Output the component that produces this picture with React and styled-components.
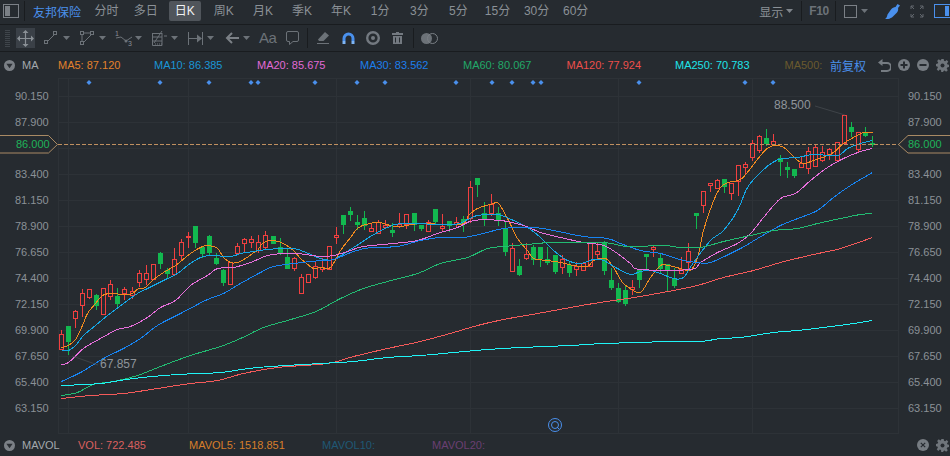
import React from "react";
import styled, { createGlobalStyle } from "styled-components";

const Global = createGlobalStyle`
  html, body { margin: 0; padding: 0; background: #262b30; }
  * { box-sizing: border-box; }
`;

const BG = "#262b30";
const GREY = "#8b9197";
const ICON = "#6c7278";
const BLUE = "#4a90ec";
const FONT = `"Liberation Sans", "Noto Sans CJK SC", sans-serif`;

const Page = styled.div`
  width: 950px; height: 456px; overflow: hidden; background: ${BG};
  font-family: ${FONT}; font-size: 11px; color: ${GREY};
  display: flex; flex-direction: column;
`;
const TopBar = styled.header`
  height: 25px; flex: none; display: flex; align-items: center;
  border-bottom: 1px solid #191c1f; padding-bottom: 2px;
`;
const Ico = styled.svg`
  flex: none; display: block; margin-left: ${(p) => p.$ml || 0}px;
`;
const Sep = styled.span`
  flex: none; width: 1px; height: ${(p) => p.$h || 20}px; background: #191c1f;
  margin-left: ${(p) => p.$ml || 0}px;
`;
const Title = styled.span`
  font-size: 12px; color: ${BLUE}; margin-left: 8px; width: 54px; white-space: nowrap;
`;
const NavItem = styled.span`
  flex: none; width: 39.1px; display: flex; justify-content: center; white-space: nowrap;
  font-size: 12px; color: ${GREY};
`;
const NavLabel = styled.span`
  height: 20px; line-height: 20px; padding: 0 6px; border-radius: 2px;
  background: ${(p) => (p.$active ? "#50555b" : "transparent")};
  color: ${(p) => (p.$active ? "#f2f3f4" : GREY)};
`;
const RightTools = styled.div`
  margin-left: auto; margin-right: -3px; display: flex; align-items: center;
`;
const Show = styled.span`
  font-size: 12px; color: ${GREY};
`;
const F10 = styled.span`
  font-size: 12px; font-weight: 700; color: #6c7278; margin-left: 7px; letter-spacing: -0.3px;
`;
const ToolBar = styled.div`
  height: 27px; flex: none; display: flex; align-items: center;
  border-bottom: 1px solid #191c1f;
`;
const MoveBox = styled.span`
  flex: none; width: 19px; height: 20px; margin-left: 6px; background: #3a4047;
  display: flex; align-items: center; justify-content: center;
`;
const AaText = styled.span`
  flex: none; width: 16px; margin-left: 9px; font-size: 15px; line-height: 20px;
  color: ${ICON}; white-space: nowrap; letter-spacing: -0.5px;
`;
const LegendRow = styled.div`
  height: ${(p) => p.$h}px; flex: none; display: flex; align-items: center; white-space: nowrap;
`;
const DropName = styled.span`
  color: #a3a8ad; margin-left: 7px; width: ${(p) => p.$w}px; flex: none;
`;
const Legend = styled.span`
  flex: none; width: ${(p) => p.$w}px; color: ${(p) => p.$c};
`;
const Adjust = styled.span`
  font-size: 12px; color: ${BLUE}; width: 48px; flex: none;
`;
const Chart = styled.main`
  position: relative; height: 356px; flex: none; display: flex;
`;
const Axis = styled.div`
  flex: none; width: ${(p) => p.$w}px; padding: 5px 0 0 ${(p) => p.$pl}px;
  display: flex; flex-direction: column;
`;
const Tick = styled.span`
  height: 26px; line-height: 26px; color: ${GREY}; white-space: nowrap;
`;
const Plot = styled.svg`
  flex: none; display: block;
`;
const PriceTag = styled.div`
  position: absolute; top: 57px; left: ${(p) => p.$x}px; width: ${(p) => p.$w}px; height: 19px;
  padding-left: ${(p) => p.$pl}px; line-height: 19px; color: #1fb35a;
  & > svg { position: absolute; left: 0; top: 0; }
  & > span { position: relative; }
`;
const Note = styled.span`
  position: absolute; left: ${(p) => p.$x}px; top: ${(p) => p.$y}px;
  font-size: 12px; line-height: 14px; color: #8f959b;
`;

const Caret = ({ ml, c = ICON }) => (
  <Ico $ml={ml} width="7" height="4" viewBox="0 0 7 4"><path d="M0 0h7L3.5 4z" fill={c} /></Ico>
);
const Drop = ({ ml }) => (
  <Ico $ml={ml} width="11" height="11" viewBox="0 0 11 11">
    <circle cx="5.5" cy="5.5" r="5.5" fill="#7c8187" />
    <path d="M2.4 3.8h6.2L5.5 8.2z" fill="#2b3035" />
  </Ico>
);
const Gear = ({ ml }) => (
  <Ico $ml={ml} width="13" height="13" viewBox="0 0 13 13">
    <path d="M5.3 0h2.4l.3 1.8 1.2.5L10.7 1l1.6 1.7-1.3 1.5.5 1.2 1.5.3v2.4l-1.8.3-.5 1.2 1.1 1.6-1.7 1.6-1.5-1.2-1.2.5-.2 1.6H5.3L5 11.1l-1.2-.5L2.3 11.9.7 10.3 1.9 8.8 1.4 7.6 0 7.3V4.900l1.700-.3.500-1.200L1.100 1.900 2.800.3 4.300 1.500 5.100 1.100z" fill="#6f757b" />
    <circle cx="6.5" cy="6.5" r="2" fill={BG} />
  </Ico>
);
const RoundBtn = ({ ml, kind }) => (
  <Ico $ml={ml} width="12" height="12" viewBox="0 0 12 12">
    <circle cx="6" cy="6" r="6" fill="#767c82" />
    {kind === "x" ? (
      <path d="M3.8 3.8l4.4 4.4M8.2 3.8L3.8 8.2" stroke={BG} strokeWidth="1.2" />
    ) : (
      <path d={kind === "plus" ? "M2.5 6h7M6 2.5v7" : "M2.5 6h7"} stroke={BG} strokeWidth="2" />
    )}
  </Ico>
);

const navItems = ["分时", "多日", "日K", "周K", "月K", "季K", "年K", "1分", "3分", "5分", "15分", "30分", "60分"];

const leftTicks = ["90.150", "87.900", "", "83.400", "81.150", "78.900", "76.650", "74.400", "72.150", "69.900", "67.650", "65.400", "63.150"];

const dots = [89, 160, 209, 251, 258, 315, 357, 385, 456, 492, 512, 533, 541, 639, 745, 773];

const hGrid = [96, 122, 148, 174, 200, 226, 252, 278, 304, 330, 356, 382, 408];
const vGrid = [68, 188, 336, 470, 618, 752];

// kind, body top, body bottom, wick top, wick bottom (page pixels)
const candles = [
  ["r",334,349,330,349],["g",326,342,326,355],["r",311,318,310,328],["r",293,305,289,317],["r",289,297,289,299],
  ["g",295,306,294,310],["r",288,314,288,314],["r",284,296,280,300],["g",296,304,288,307],["r",289,293,287,300],
  ["r",291,295,287,299],["r",273,282,270,287],["r",273,279,265,285],["r",264,279,264,279],["g",253,264,252,269],
  ["g",270,274,268,279],["r",259,274,248,274],["r",242,255,239,260],["r",236,236,232,248],["g",226,243,226,248],
  ["g",247,254,247,258],["g",236,253,235,256],["g",258,264,253,265],["g",270,283,269,286],["r",262,284,262,284],
  ["r",246,253,243,255],["r",239,243,238,252],["r",239,242,236,248],["r",242,250,235,253],["r",235,247,231,250],
  ["g",236,244,236,244],["g",247,253,238,255],["g",257,269,248,269],["r",258,268,257,271],["r",277,293,274,293],
  ["r",274,282,274,282],["r",266,277,262,279],["r",267,269,258,272],["r",246,269,246,269],["r",235,237,227,244],
  ["g",215,225,215,234],["g",211,215,207,221],["g",222,225,215,230],["g",218,226,211,230],["r",228,231,223,232],
  ["r",222,233,220,233],["r",225,227,220,229],["g",230,233,223,237],["r",224,226,213,228],["r",214,224,214,229],
  ["g",213,225,213,231],["g",225,229,225,231],["r",222,231,220,231],["g",209,222,209,225],["r",226,228,214,231],
  ["g",221,226,221,232],["r",222,224,217,227],["g",219,224,216,232],["r",187,218,181,223],["g",178,185,178,197],
  ["g",213,219,202,226],["r",204,213,194,216],["g",213,220,207,226],["g",229,252,221,256],["r",248,271,243,272],
  ["g",266,275,259,276],["r",254,258,243,260],["g",247,260,245,265],["g",247,259,247,267],["g",259,263,247,265],
  ["g",255,272,255,274],["r",259,267,255,274],["g",265,273,262,277],["r",266,269,262,276],["r",263,270,262,270],
  ["r",242,266,242,266],["r",251,254,242,260],["g",242,271,241,275],["g",280,288,268,290],["g",288,302,283,303],
  ["g",290,304,285,306],["r",287,289,280,295],["g",269,280,269,288],["g",254,257,254,270],["r",247,249,246,257],
  ["g",258,269,253,273],["g",264,270,264,292],["g",279,286,268,288],["r",269,273,257,274],["r",251,262,243,270],
  ["g",213,216,213,229],["r",191,205,191,213],["r",183,185,183,192],["r",180,188,179,188],["g",179,187,179,193],
  ["r",183,193,183,200],["r",165,181,165,196],["r",164,167,162,175],["r",143,157,140,161],["r",136,150,135,153],
  ["g",138,144,129,146],["r",141,144,134,145],["g",158,162,155,176],["g",167,170,162,178],["g",169,176,169,178],
  ["r",163,167,157,167],["r",151,168,147,174],["r",147,166,145,167],["r",152,160,146,162],["r",149,154,148,160],
  ["r",142,160,142,160],["r",115,143,115,143],["g",127,132,122,137],["r",132,149,132,152],["g",132,136,127,137],
  ["g",143,145,136,147],
];

const lines = [
  { c: "#f28a1e", p: "61,347 68,345 75,339 82,325 87,313 95,303 102,295 110,293 123,294 132,293 138,288 145,287 153,279 163,272 175,265 185,257 190,253 200,247 207,245 217,248 223,257 230,262 237,262 245,258 252,253 257,250 263,242 273,240 283,243 293,250 300,258 305,262 313,268 320,267 330,267 340,250 350,237 357,228 365,224 378,222 390,225 400,226 420,223 460,224 468,215 477,208 490,204 498,203 507,218 517,238 527,250 533,258 547,260 560,262 573,265 587,266 593,260 605,258 613,267 622,282 630,288 640,292 650,277 660,265 668,265 680,268 690,270 697,257 703,230 712,203 720,187 728,182 740,179 750,168 760,155 768,147 777,145 785,148 795,158 803,163 813,160 822,157 833,152 843,143 853,137 863,132 872,132" },
  { c: "#14a6e6", p: "61,350 68,350 75,345 83,335 95,325 107,315 123,303 137,293 147,288 163,280 177,273 187,265 200,257 210,255 230,256 240,253 247,252 267,249 293,248 308,253 320,258 333,259 353,247 370,236 387,227 403,223 453,224 467,219 477,215 497,214 513,220 527,227 540,237 553,250 567,260 580,263 593,259 603,260 617,268 630,274 640,271 650,270 660,273 673,278 683,277 693,262 710,240 723,230 737,210 747,187 760,172 772,162 782,158 797,157 813,154 837,155 847,148 860,143 872,140" },
  { c: "#e86fdc", p: "61,364 68,362 83,348 100,338 117,329 130,326 147,317 160,307 175,300 190,285 207,275 217,268 233,267 250,262 267,255 283,253 297,253 320,256 333,255 347,251 363,246 393,243 417,240 437,233 457,227 473,220 500,220 523,225 540,232 560,237 583,242 603,245 617,253 630,263 640,269 690,269 700,262 717,252 737,243 750,233 763,217 780,198 795,193 810,180 827,167 843,158 860,151 872,148" },
  { c: "#1784f2", p: "61,381 80,372 103,358 123,348 140,338 157,325 180,313 207,299 223,293 240,283 260,272 273,266 293,263 320,260 333,259 353,251 370,247 397,246 420,240 440,237 463,237 483,233 503,228 533,227 553,230 583,236 607,238 620,243 640,250 660,253 683,260 697,262 710,262 740,248 757,238 780,225 800,217 817,210 833,197 850,185 872,172" },
  { c: "#22bb72", p: "61,395 77,392 93,384 113,381 137,375 160,366 190,355 220,346 240,338 263,327 287,320 307,314 320,309 340,298 363,288 387,281 417,273 440,263 467,257 487,248 503,246 537,243 553,242 603,242 627,246 663,245 680,247 700,247 723,241 750,235 773,230 797,228 817,223 840,218 860,214 872,213" },
  { c: "#f45a5a", p: "61,398 90,395 123,393 157,388 190,383 217,380 243,373 277,367 327,363 353,356 387,348 420,341 453,332 477,325 503,319 537,313 587,304 620,299 640,296 673,290 697,285 723,277 753,270 780,262 813,254 840,248 872,237" },
  { c: "#1ff4f6", p: "61,385 100,383 133,378 177,374 220,372 257,367 320,363 353,361 387,357 420,355 453,352 487,349 520,347 570,345 603,343 640,342 665,341 700,341 720,338 740,337 773,332 797,330 823,327 853,323 872,320" },
];

// Catmull-Rom through the sampled points, so a moving average reads as a curve.
const smooth = (str) => {
  const pts = str.split(" ").map((s) => s.split(",").map(Number));
  let d = `M${pts[0][0]} ${pts[0][1]}`;
  for (let i = 0; i < pts.length - 1; i++) {
    const a = pts[Math.max(i - 1, 0)];
    const b = pts[i];
    const c = pts[i + 1];
    const e = pts[Math.min(i + 2, pts.length - 1)];
    const c1x = b[0] + (c[0] - a[0]) / 6;
    const c1y = b[1] + (c[1] - a[1]) / 6;
    const c2x = c[0] - (e[0] - b[0]) / 6;
    const c2y = c[1] - (e[1] - b[1]) / 6;
    d += `C${c1x.toFixed(1)} ${c1y.toFixed(1)} ${c2x.toFixed(1)} ${c2y.toFixed(1)} ${c[0]} ${c[1]}`;
  }
  return d;
};

const Candle = ({ d, i }) => {
  const [k, t, b, wt, wb] = d;
  const x = Math.round(61 + i * 7.05);
  if (k === "g") {
    return (
      <g>
        <rect x={x} y={wt} width="1" height={wb - wt} fill="#12b84f" />
        <rect x={x - 2} y={t} width="5" height={Math.max(b - t, 2)} fill="#12b84f" />
      </g>
    );
  }
  return (
    <g>
      {wt < t && <rect x={x} y={wt} width="1" height={t - wt} fill="#f24040" />}
      {wb > b && <rect x={x} y={b} width="1" height={wb - b} fill="#f24040" />}
      <rect x={x - 2 + 0.5} y={t + 0.5} width="4" height={Math.max(b - t, 1)} fill="none" stroke="#f24040" />
    </g>
  );
};

export default function App() {
  return (
    <Page>
      <Global />
      <TopBar>
        <Ico $ml={3} width="16" height="14" viewBox="0 0 16 14">
          <rect x="0.5" y="0.5" width="15" height="13" fill="none" stroke="#7b8086" />
          <rect x="2" y="2" width="5" height="10" fill="#7b8086" />
        </Ico>
        <Sep $ml={5} />
        <Title>友邦保险</Title>
        {navItems.map((n) => (
          <NavItem key={n}>
            <NavLabel $active={n === "日K"}>{n}</NavLabel>
          </NavItem>
        ))}
        <RightTools>
          <Show>显示</Show>
          <Caret ml={3} c="#7f858b" />
          <Sep $ml={8} />
          <F10>F10</F10>
          <Sep $ml={6} />
          <Ico $ml={8} width="13" height="13" viewBox="0 0 13 13">
            <rect x="0.5" y="0.5" width="12" height="12" fill="none" stroke="#7b8086" />
          </Ico>
          <Caret ml={4} />
          <Ico $ml={17} width="15" height="15" viewBox="0 0 15 15">
            <path d="M0 15c1.500-1 2-2.500 2.500-4.500L6 5.500C7 4 9 3 10.500 3L12.500 0 15 1.500 13 4c.5 1.500 0 3-1 4.500L8 12.500C6 14.500 3 15.500 0 15z" fill={BLUE} />
          </Ico>
          <Ico $ml={10} width="14" height="13" viewBox="0 0 14 13">
            <path d="M1 4V1h3M10 1h3v3M1 9v3h3M10 12h3V9M1 1l3 3M13 1l-3 3M1 12l3-3M13 12l-3-3" fill="none" stroke="#62686e" />
          </Ico>
          <Ico $ml={10} width="19" height="14" viewBox="0 0 19 14">
            <rect x="0.5" y="0.5" width="18" height="13" fill="none" stroke={BLUE} />
            <rect x="11" y="2" width="4" height="10" fill={BLUE} />
          </Ico>
        </RightTools>
      </TopBar>

      <ToolBar>
        <Ico $ml={5} width="5" height="17" viewBox="0 0 5 17">
          <path d="M0 .5h5M0 2.500h5M0 4.500h5M0 6.500h5M0 8.500h5M0 10.500h5M0 12.500h5M0 14.500h5M0 16.500h5" stroke="#3f454b" />
        </Ico>
        <MoveBox>
          <svg width="17" height="17" viewBox="0 0 17 17">
            <path d="M8.5 2v13M2 8.500h13" stroke="#8a9096" strokeWidth="1.2" />
            <path d="M8.5 0l3 3h-6zM8.500 17l3-3h-6zM0 8.500l3-3v6zM17 8.500l-3-3v6z" fill="#8a9096" />
          </svg>
        </MoveBox>
        <Ico $ml={9} width="14" height="14" viewBox="0 0 14 14">
          <path d="M3 11l8-8" stroke={ICON} />
          <rect x="0.5" y="9.5" width="3" height="3" fill="none" stroke={ICON} />
          <rect x="9.5" y="0.5" width="3" height="3" fill="none" stroke={ICON} />
        </Ico>
        <Caret ml={5} />
        <Ico $ml={10} width="15" height="15" viewBox="0 0 15 15">
          <path d="M3 2h8M2 3v8M11.500 3.500L3 12" fill="none" stroke={ICON} />
          <rect x="0.5" y="0.5" width="3" height="3" fill="none" stroke={ICON} />
          <rect x="10.5" y="0.5" width="3" height="3" fill="none" stroke={ICON} />
          <rect x="0.5" y="10.5" width="3" height="3" fill="none" stroke={ICON} />
        </Ico>
        <Caret ml={4} />
        <Ico $ml={9} width="18" height="16" viewBox="0 0 18 16">
          <text x="0" y="6" fontSize="7" fontFamily={FONT} fill="#8a9096">1</text>
          <text x="13" y="16" fontSize="7" fontFamily={FONT} fill="#8a9096">3</text>
          <path d="M1 8l5-1 5 4 6-4" fill="none" stroke={ICON} />
          <circle cx="11" cy="11" r="1.5" fill={ICON} />
        </Ico>
        <Caret ml={2} />
        <Ico $ml={10} width="16" height="16" viewBox="0 0 16 16">
          <path d="M1 3.500h9M.5 3v12.500H10V3M1 7h9M1 11h9M10 1l-8 12M12 6h3" fill="none" stroke={ICON} />
          <path d="M3 14h7" stroke={ICON} strokeDasharray="1 1" />
        </Ico>
        <Caret ml={3} />
        <Ico $ml={10} width="15" height="13" viewBox="0 0 15 13">
          <path d="M.5 0v13M14.500 0v13M1 6.500h8" stroke={ICON} />
          <path d="M14 6.500L9 2.500v8z" fill={ICON} />
        </Ico>
        <Caret ml={4} />
        <Ico $ml={11} width="14" height="12" viewBox="0 0 14 12">
          <path d="M14 6H2M7 1L2 6l5 5" fill="none" stroke="#7b8086" strokeWidth="2" />
        </Ico>
        <Caret ml={4} />
        <AaText>Aa</AaText>
        <Ico $ml={11} width="13" height="14" viewBox="0 0 13 14">
          <path d="M2 .5h9a1.500 1.500 0 0 1 1.500 1.500v7A1.500 1.500 0 0 1 11 10.500H7L3.500 13.500V10.500H2A1.500 1.500 0 0 1 .5 9V2A1.500 1.500 0 0 1 2 .5z" fill="none" stroke={ICON} />
        </Ico>
        <Sep $ml={8} />
        <Ico $ml={9} width="14" height="12" viewBox="0 0 14 12">
          <path d="M8 0l4 3.500-5.500 5.500H2L1 7.500z" fill={ICON} />
          <path d="M0 11.500h12" stroke={ICON} />
        </Ico>
        <Ico $ml={11} width="13" height="12" viewBox="0 0 13 12">
          <path d="M2 9V6.500a4.500 4.500 0 0 1 9 0V9" fill="none" stroke={BLUE} strokeWidth="3" />
          <path d="M.5 9h3v3h-3zM9.500 9h3v3h-3z" fill="#7fb5f5" />
        </Ico>
        <Ico $ml={11} width="14" height="14" viewBox="0 0 14 14">
          <circle cx="7" cy="7" r="5.8" fill="none" stroke="#737980" strokeWidth="2.4" />
          <circle cx="7" cy="7" r="2" fill="#737980" />
        </Ico>
        <Ico $ml={12} width="11" height="12" viewBox="0 0 11 12">
          <path d="M4 0h3v1h4v2H0V1h4zM1 4h9v8H1z" fill="#737980" />
          <path d="M3.500 5.500v5M7.500 5.500v5" stroke={BG} />
        </Ico>
        <Sep $ml={10} />
        <Ico $ml={7} width="17" height="11" viewBox="0 0 17 11">
          <circle cx="5.5" cy="5.5" r="5.5" fill="#6c7278" />
          <circle cx="11.5" cy="5.5" r="5" fill="none" stroke="#7b8086" />
        </Ico>
      </ToolBar>

      <LegendRow $h={26}>
        <Drop ml={4} />
        <DropName $w={36}>MA</DropName>
        <Legend $w={96} $c="#e2812c">MA5: 87.120</Legend>
        <Legend $w={103} $c="#1a96d6">MA10: 86.385</Legend>
        <Legend $w={103} $c="#e26ad6">MA20: 85.675</Legend>
        <Legend $w={103} $c="#1c7fec">MA30: 83.562</Legend>
        <Legend $w={103.5} $c="#22a868">MA60: 80.067</Legend>
        <Legend $w={108.5} $c="#ec4f4c">MA120: 77.924</Legend>
        <Legend $w={109.5} $c="#1fe4e8">MA250: 70.783</Legend>
        <Legend $w={45.5} $c="#6a5a2e">MA500:</Legend>
        <Adjust>前复权</Adjust>
        <Ico width="13" height="13" viewBox="0 0 13 13">
          <path d="M3 4h6a3.500 3.500 0 0 1 0 8H3" fill="none" stroke="#767c82" strokeWidth="2" />
          <path d="M4.500 0v7L0 3.500z" fill="#767c82" />
        </Ico>
        <RoundBtn ml={7} kind="plus" />
        <RoundBtn ml={7} kind="minus" />
        <Gear ml={7} />
      </LegendRow>

      <Chart>
        <Axis $w={58} $pl={15}>
          {leftTicks.map((t, i) => (<Tick key={i}>{t || "\u00a0"}</Tick>))}
        </Axis>
        <Plot width="841" height="356" viewBox="58 78 841 356">
          <g shapeRendering="crispEdges" stroke="#2d3237">
            <rect x="58.5" y="78.5" width="840" height="355" fill="none" />
            {hGrid.map((y) => (<line key={y} x1="58" x2="899" y1={y + 0.5} y2={y + 0.5} />))}
            {vGrid.map((x) => (<line key={x} x1={x + 0.5} x2={x + 0.5} y1="78" y2="433" />))}
          </g>
          {dots.map((x) => (
            <path key={x} d={`M${x} 80l2.500 2.500-2.500 2.500-2.500-2.500z`} fill={BLUE} />
          ))}
          <g shapeRendering="crispEdges">
            {candles.map((d, i) => (<Candle key={i} d={d} i={i} />))}
          </g>
          {lines.map((l) => (
            <path key={l.c} d={smooth(l.p)} fill="none" stroke={l.c} strokeWidth="1" shapeRendering="crispEdges" transform="translate(0.5 0.5)" />
          ))}
          <line x1="58" x2="899" y1="144.5" y2="144.5" stroke="#c09060" strokeDasharray="4 2" shapeRendering="crispEdges" />
          <path d="M72 356l26 9M815 106l30 9" stroke="#3e4348" strokeWidth="1" fill="none" />
          <g fill="none" stroke={BLUE}>
            <circle cx="555" cy="425" r="6.5" />
            <circle cx="555" cy="425" r="3.5" />
            <path d="M557 427l2 2" />
          </g>
        </Plot>
        <Axis $w={51} $pl={9}>
          {leftTicks.map((t, i) => (<Tick key={i}>{t || "\u00a0"}</Tick>))}
        </Axis>
        <PriceTag $x={0} $w={58} $pl={16}>
          <svg width="58" height="19" viewBox="0 0 58 19">
            <path d="M0 .5h48.500L57.500 9.500 48.500 18H0" fill="none" stroke="#a98a64" />
          </svg>
          <span>86.000</span>
        </PriceTag>
        <PriceTag $x={898} $w={52} $pl={10}>
          <svg width="52" height="19" viewBox="0 0 52 19">
            <path d="M52 .5H10L.5 9.500 10 18h42" fill="none" stroke="#a98a64" />
          </svg>
          <span>86.000</span>
        </PriceTag>
        <Note $x={100} $y={279}>67.857</Note>
        <Note $x={774} $y={20}>88.500</Note>
      </Chart>

      <LegendRow $h={22}>
        <Drop ml={4} />
        <DropName $w={56}>MAVOL</DropName>
        <Legend $w={111} $c="#d9605f">VOL: 722.485</Legend>
        <Legend $w={133} $c="#d67e2a">MAVOL5: 1518.851</Legend>
        <Legend $w={110} $c="#1f5874">MAVOL10:</Legend>
        <Legend $w={485} $c="#6a3f72">MAVOL20:</Legend>
        <RoundBtn kind="x" />
        <Gear ml={7} />
      </LegendRow>
    </Page>
  );
}
